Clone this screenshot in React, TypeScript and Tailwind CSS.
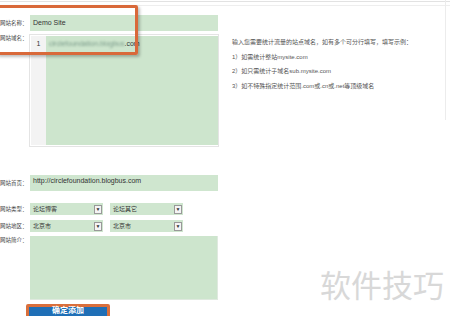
const cn = { fontFamily: '"Liberation Sans", "Noto Sans CJK SC", sans-serif' };

function Label({ text }: { text: string }) {
  return <span className="w-[30px] shrink-0 whitespace-nowrap text-[5.5px] text-[#444]">{text}</span>;
}

function Select({ value }: { value: string }) {
  return (
    <div className="flex h-[12px] w-[73px] items-center justify-between bg-[#cfe6cf] pl-[3px] pr-[1px]">
      <span className="text-[6px] text-[#333]">{value}</span>
      <span className="flex h-[9px] w-[8px] items-center justify-center border border-[#999] bg-[#f4f4f4] text-[5px] leading-none text-[#333]">▼</span>
    </div>
  );
}

export default function App() {
  return (
    <div className="relative h-[316px] w-[450px] overflow-hidden bg-white" style={cn}>
      <div className="h-[2px] border-b border-[#e2e2e2]" />
      <div className="h-[4px] border-b border-[#eee]" />
      <div className="flex pt-[9px]">
        <div className="flex w-[220px] flex-col">
          <div className="flex items-center">
            <Label text="网站名称：" />
            <div className="flex h-[16px] w-[188px] items-center bg-[#cfe6cf] pl-[3px] text-[7px] text-[#333]">Demo Site</div>
          </div>
          <div className="mt-[3px] flex items-start">
            <Label text="网站域名：" />
            <div className="-ml-[1px] flex h-[113px] w-[190px] border border-[#e4e4e4] bg-white p-[1px] pr-0">
              <div className="w-[15px] bg-[#f3f3f3] pt-[3px] text-center text-[7px] text-[#333]">1</div>
              <div className="flex-1 bg-[#cde5cd] pl-[3px] pt-[3px] text-[7px] text-[#333]">
                <span className="text-[#7a9a8a] blur-[1.2px]">circlefoundation.blogbus</span>.com
              </div>
            </div>
          </div>
          <div className="mt-[28px] flex items-center">
            <Label text="网站首页：" />
            <div className="flex h-[16px] w-[188px] items-start bg-[#cfe6cf] pl-[3px] pt-[1px] text-[7px] text-[#333]">http://circlefoundation.blogbus.com</div>
          </div>
          <div className="mt-[12px] flex items-center">
            <Label text="网站类型：" />
            <div className="flex gap-[7px]">
              <Select value="论坛博客" />
              <Select value="论坛其它" />
            </div>
          </div>
          <div className="mt-[5px] flex items-center">
            <Label text="网站地区：" />
            <div className="flex gap-[7px]">
              <Select value="北京市" />
              <Select value="北京市" />
            </div>
          </div>
          <div className="mt-[4px] flex items-start">
            <Label text="网站简介：" />
            <div className="h-[64px] w-[188px] border-b border-r border-[#dfe9df] bg-[#cde5cd]" />
          </div>
          <div className="mt-[4px] pl-[26px]">
            <div className="flex h-[20px] w-[84px] items-center justify-center rounded-[2px] border-[3px] border-[#d96f3c] bg-[#1f6fb6] pb-[6px] text-[8px] font-bold text-white">
              确定添加
            </div>
          </div>
        </div>
        <div className="flex flex-col gap-[7px] pl-[12px] pt-[24px] text-[6px] leading-[7.5px] text-[#555]">
          <p>输入您需要统计流量的站点域名，如有多个可分行填写，填写示例：</p>
          <p>1）如需统计整站mysite.com</p>
          <p>2）如只需统计子域名sub.mysite.com</p>
          <p>3）如不特殊指定统计范围.com或.cn或.net等顶级域名</p>
        </div>
      </div>
      <div className="absolute right-[4px] top-0 h-[120px] w-px bg-[#ececec]" />
      <div className="absolute -left-[4px] top-[5px] h-[50px] w-[142px] rounded-[2px] border-[3px] border-[#d9693a] shadow-[2px_2px_3px_rgba(0,0,0,0.25)]" />
      <div className="absolute left-[320px] top-[268px] text-[31px] leading-none text-[#d8d8d8]" style={{ fontFamily: '"Noto Sans CJK SC", sans-serif' }}>
        软件技巧
      </div>
    </div>
  );
}
